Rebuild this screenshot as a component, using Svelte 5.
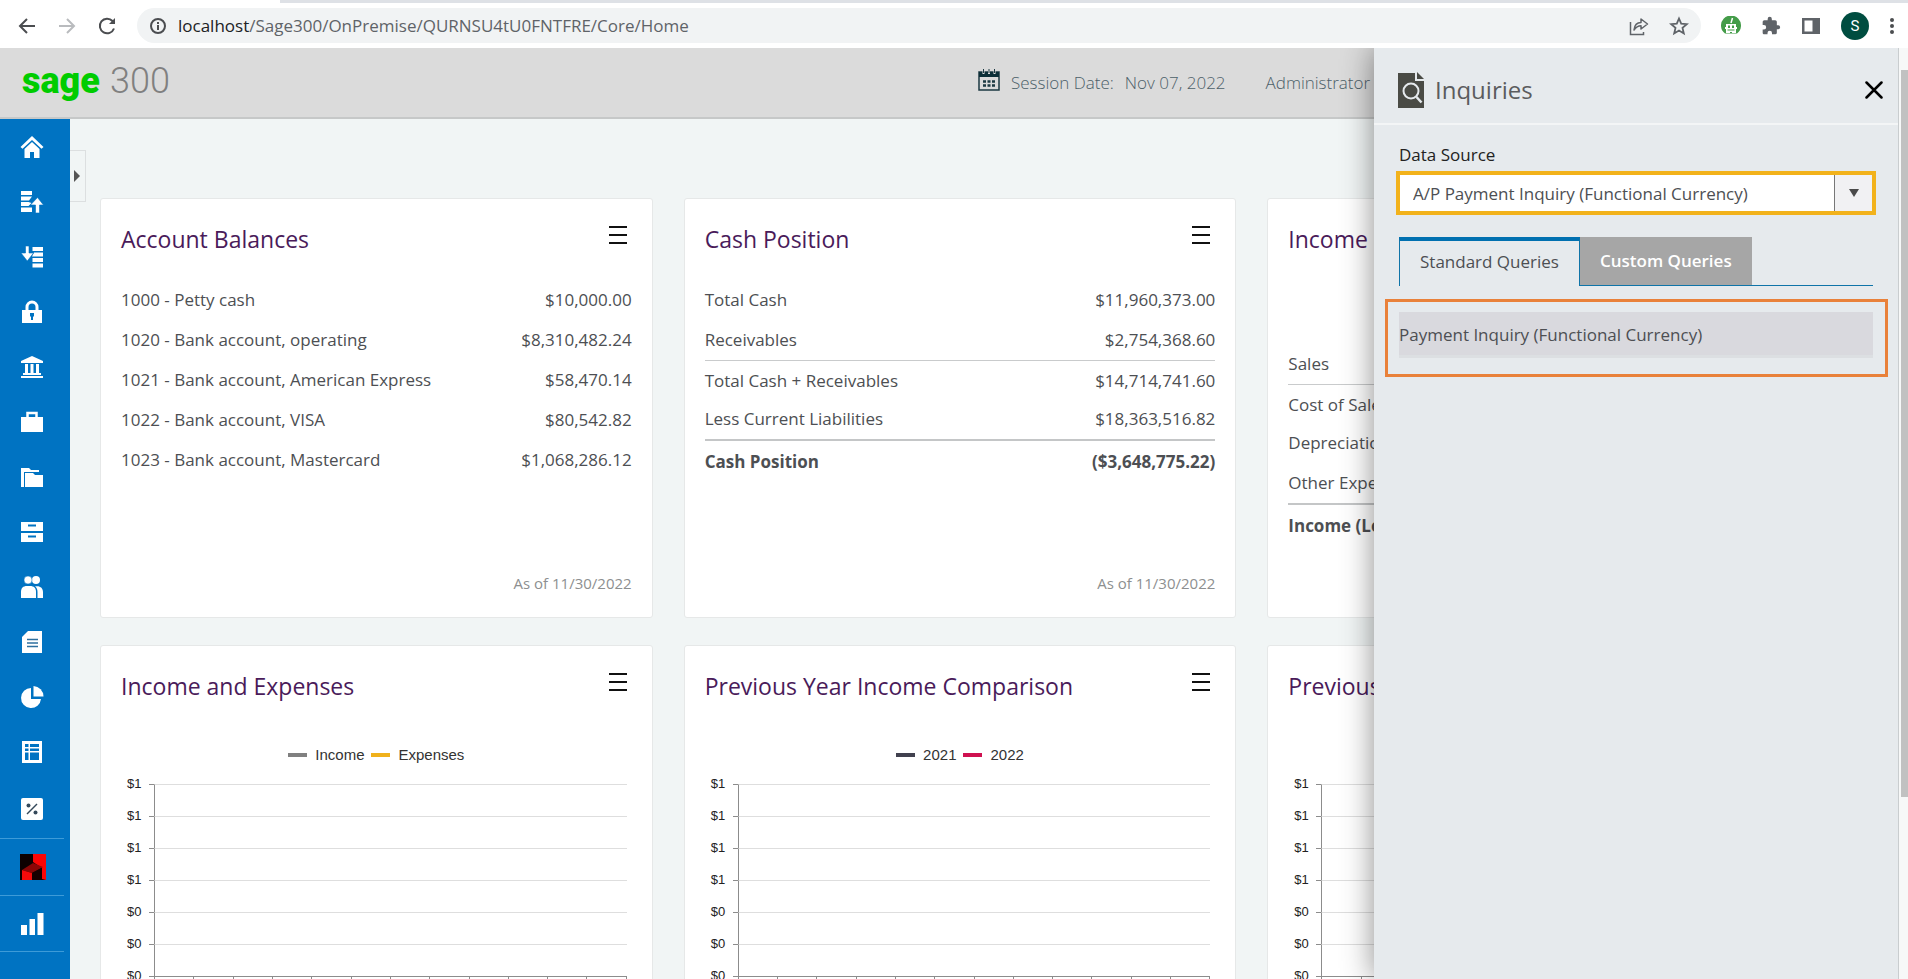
<script>
  let dataSource = 'A/P Payment Inquiry (Functional Currency)'
  let activeTab = 'standard'

  const modules = [
    'Home',
    'Accounts Receivable',
    'Accounts Payable',
    'Administrative Services',
    'Bank Services',
    'Common Services',
    'Project and Job Costing',
    'Inventory Control',
    'Payroll',
    'Order Entry',
    'General Ledger',
    'Purchase Orders',
    'Tax Services',
  ]

  const balances = [
    { label: '1000 - Petty cash', value: '$10,000.00' },
    { label: '1020 - Bank account, operating', value: '$8,310,482.24' },
    { label: '1021 - Bank account, American Express', value: '$58,470.14' },
    { label: '1022 - Bank account, VISA', value: '$80,542.82' },
    { label: '1023 - Bank account, Mastercard', value: '$1,068,286.12' },
  ]

  const cash = [
    { label: 'Total Cash', value: '$11,960,373.00' },
    { label: 'Receivables', value: '$2,754,368.60' },
    { label: 'Total Cash + Receivables', value: '$14,714,741.60', kind: 'subtotal' },
    { label: 'Less Current Liabilities', value: '$18,363,516.82' },
    { label: 'Cash Position', value: '($3,648,775.22)', kind: 'total' },
  ]

  const income = [
    { label: 'Sales', value: '' },
    { label: 'Cost of Sales', value: '', kind: 'subtotal' },
    { label: 'Depreciation', value: '' },
    { label: 'Other Expenses', value: '' },
    { label: 'Income (Loss)', value: '', kind: 'total' },
  ]

  const cards = [
    { title: 'Account Balances', rows: balances, asOf: 'As of 11/30/2022' },
    { title: 'Cash Position', rows: cash, asOf: 'As of 11/30/2022' },
    { title: 'Income Reporting', rows: income, lowered: true },
    {
      title: 'Income and Expenses',
      legend: [
        { name: 'Income', color: '#808080' },
        { name: 'Expenses', color: '#f0b11c' },
      ],
    },
    {
      title: 'Previous Year Income Comparison',
      legend: [
        { name: '2021', color: '#41414f' },
        { name: '2022', color: '#cf1150' },
      ],
    },
    { title: 'Previous Year Expense Comparison', legend: [] },
  ]

  const ticks = ['$1', '$1', '$1', '$1', '$0', '$0']
  const months = Array(12).fill(0)
</script>

<div class="browser">
  <div class="tabstrip"><span></span></div>
  <div class="toolbar">
    <button class="tool" aria-label="Back">
      <svg width="20" height="20" viewBox="0 0 20 20" fill="none" stroke="#4b4d50" stroke-width="2"><path d="M18 10H3M10 3l-7 7 7 7" /></svg>
    </button>
    <button class="tool" aria-label="Forward">
      <svg width="20" height="20" viewBox="0 0 20 20" fill="none" stroke="#b9bbbe" stroke-width="2"><path d="M2 10h15M10 3l7 7-7 7" /></svg>
    </button>
    <button class="tool" aria-label="Reload">
      <svg width="20" height="20" viewBox="0 0 20 20" fill="none" stroke="#4b4d50" stroke-width="2"><path d="M17 12.500a7.300 7.300 0 1 1-1.500-7.500L17.500 7" /><path d="M18 2v6h-6z" fill="#4b4d50" stroke="none" /></svg>
    </button>
    <div class="omnibox">
      <svg width="18" height="18" viewBox="0 0 18 18" fill="none" stroke="#4b4d50" stroke-width="2"><circle cx="9" cy="9" r="7" /><path d="M9 8v5M9 5v2" /></svg>
      <div class="address"><b>localhost</b>/Sage300/OnPremise/QURNSU4tU0FNTFRE/Core/Home</div>
      <button aria-label="Share">
        <svg width="20" height="20" viewBox="0 0 20 20" fill="none" stroke="#5f6368" stroke-width="1.500"><path d="M1.500 6v12.500h13V16" /><path d="M5 14c.5-5 3-7.500 7-7.500V3l6.500 5-6.500 5V9.800C9 9.800 7 11 5 14z" stroke-linejoin="round" /></svg>
      </button>
      <button aria-label="Bookmark">
        <svg width="20" height="20" viewBox="0 0 20 20" fill="none" stroke="#5f6368" stroke-width="1.800"><path d="M10 2.500l2.200 5.200 5.600.5-4.300 3.700 1.300 5.500-4.800-2.900-4.800 2.900 1.300-5.500-4.300-3.700 5.600-.5z" /></svg>
      </button>
    </div>
    <button class="tool" aria-label="Extension">
      <svg width="20" height="20" viewBox="0 0 20 20"><path d="M4 17.500A10 10 0 1 1 16 17.500z" fill="#449c49" /><path d="M5 8h10v3h1v2h-1v4h-4v-1H9v1H5v-4H4v-2h1z" fill="#fff" /><path d="M10 7l1.500-5" stroke="#fff" stroke-width="1.500" /><path d="M7 9.500h2V12H7zM11 9.500h2V12h-2zM6.500 13.500h7v1h-7z" fill="#449c49" /></svg>
    </button>
    <button class="tool" aria-label="Extensions">
      <svg width="20" height="20" viewBox="0 0 24 24" fill="#5f6368"><path d="M20.500 11H19V7a2 2 0 0 0-2-2h-4V3.500a2.500 2.500 0 0 0-5 0V5H4a2 2 0 0 0-2 2v3.800h1.500a2.700 2.700 0 0 1 0 5.400H2V20c0 1.100.9 2 2 2h3.800v-1.500a2.700 2.700 0 0 1 5.400 0V22H17a2 2 0 0 0 2-2v-4h1.500a2.500 2.500 0 0 0 0-5z" /></svg>
    </button>
    <button class="tool" aria-label="Side panel">
      <svg width="20" height="20" viewBox="0 0 20 20"><path d="M1 2h18v16H1zM3.500 4.500v11h8v-11z" fill="#5f6368" fill-rule="evenodd" /></svg>
    </button>
    <button class="profile">S</button>
    <button class="tool" aria-label="Menu">
      <svg width="6" height="18" viewBox="0 0 6 18" fill="#4b4d50"><circle cx="3" cy="3" r="2" /><circle cx="3" cy="9" r="2" /><circle cx="3" cy="15" r="2" /></svg>
    </button>
  </div>
</div>

<div class="page">
  <header>
    <div class="logo"><strong>sage</strong><span>300</span></div>
    <div class="session">
      <svg width="22" height="22" viewBox="0 0 22 22"><path d="M1 3h20v18H1z" fill="none" stroke="#1d3a43" stroke-width="1.500" /><path d="M1 3h20v5H1z" fill="#0c2f38" /><path d="M5.500 0v5M11 0v5M16.500 0v5" stroke="#dbdbdb" stroke-width="2" /><path d="M5.500 0v4M11 0v4M16.500 0v4" stroke="#1d3a43" /><path d="M5 12.500h12M5 16.500h12" stroke="#1d3a43" stroke-width="2.500" stroke-dasharray="3 1.500" /></svg>
      <span>Session Date:</span>
      <time datetime="2022-11-07">Nov 07, 2022</time>
      <a href="#user">Administrator</a>
    </div>
  </header>

  <div class="body">
    <nav>
      {#each modules as name, i}
        <a href="#{i}" aria-label={name}>
          <svg width="24" height="24" viewBox="0 0 24 24" fill="#fff">
            {#if i === 0}
              <path d="M12 1L0.500 12l2 1.800L12 5l9.500 8.800 2-1.800z" /><path d="M12 7l-7.500 7v9H10v-6h4v6h5.500v-9z" />
            {:else if i === 1}
              <path d="M1 1h11v4H1zM1 6.500h11L9 10.500H1zM1 12h7.500l3 1-3 3H1zM1 17.500h11v4.500H1z" /><path d="M17.500 7.500l6 7.500h-4v8h-4v-8h-5z" stroke="#0073c2" stroke-width=".6" />
            {:else if i === 2}
              <path d="M12.500 2H23v4H12.500zM14 7.500h9v4h-11zM12.500 13H23v4H12.500zM12.500 18.500H23v4H12.500z" /><path d="M5.500 1h3.500v7h4.500l-6.200 8L1 8h4.500z" stroke="#0073c2" stroke-width=".6" />
            {:else if i === 3}
              <path d="M2 10h20v13H2z" /><path d="M7 11V7a5 5 0 0 1 10 0v4" fill="none" stroke="#fff" stroke-width="3" /><path d="M10 13h4v3l-1 1v3h-2v-3l-1-1z" fill="#0073c2" />
            {:else if i === 4}
              <path d="M12 1L1 6v2h22V6zM5 9h3v10H5zM10.500 9h3v10h-3zM16 9h3v10h-3zM3 18h18v2H3zM1 21h22v2H1z" />
            {:else if i === 5}
              <path d="M1 7h22v15H1z" /><path d="M7.500 7V3h9v4" fill="none" stroke="#fff" stroke-width="2.500" />
            {:else if i === 6}
              <path d="M1 3h8l2 2h8v2H4v15H1z" /><path d="M5 8h8l2 2h8v12H5z" />
            {:else if i === 7}
              <path d="M1 2h22v9H1zM8 4.500v2h8v-2zM1 13h22v9H1zM8 15.500v2h8v-2z" fill-rule="evenodd" />
            {:else if i === 8}
              <circle cx="16" cy="5" r="4" /><circle cx="8" cy="5" r="4" stroke="#0073c2" stroke-width=".5" /><path d="M1 23v-6c0-4 2-6 6-6h3c4 0 6 2 6 6v6zM17.500 23v-6c0-3-1-4.500-2.500-5.500 5-1 8 1.500 8 5.500v6z" />
            {:else if i === 9}
              <path d="M8 1h14v22H2V7z" /><path d="M7 9.500h11M7 13h11M7 16.500h11" stroke="#2e6f9e" stroke-width="1.500" />
            {:else if i === 10}
              <path d="M11 3a10 10 0 1 0 10 11H11z" /><path d="M13.500 1v10.500H23.500A10.500 10.500 0 0 0 13.500 1z" />
            {:else if i === 11}
              <path d="M2 1h20v22H2zM5 4v3h3.500V4zM10 4v3h9V4zM5 8.500V11h3.500V8.500zM10 8.500V11h9V8.500zM5 12.500V20h3.500v-7.500zM10 12.500V20h9v-7.500z" fill-rule="evenodd" />
            {:else}
              <rect x="1" y="1" width="22" height="22" rx="2" /><path d="M7 17L17 7" stroke="#34495a" stroke-width="1.500" /><circle cx="8.500" cy="8.500" r="2" fill="#34495a" /><circle cx="15.500" cy="15.500" r="2" fill="#34495a" />
            {/if}
          </svg>
        </a>
      {/each}
      <a class="ruled" href="#addon" aria-label="Add-on">
        <svg width="26" height="26" viewBox="0 0 26 26"><path d="M0 0h26v26H0z" fill="#0d0000" /><path d="M13 0h13v26l-4-1V14l-9-6z" fill="#fa0505" /><path d="M2 16l11-7 10 4-11 6z" fill="#8c0606" /><path d="M2 16l10 3v7H2z" fill="#f40a0a" /><path d="M12 19l10-5v12H12z" fill="#180000" /></svg>
      </a>
      <a class="ruled" href="#analytics" aria-label="Analytics">
        <svg width="24" height="24" viewBox="0 0 24 24" fill="#fff"><path d="M1 13h6v10H1zM9.500 7h5.500v16H9.500zM17.500 1h6v22h-6z" /></svg>
      </a>
    </nav>

    <button class="expand" aria-label="Expand menu"></button>

    <main>
      {#each cards as card}
        <section class="card">
          <div class="card-head">
            <h2>{card.title}</h2>
            <button class="burger" aria-label="Widget menu"><i></i><i></i><i></i></button>
          </div>
          {#if card.rows}
            <table class:lowered={card.lowered}>
              <tbody>
                {#each card.rows as row}
                  <tr class={row.kind}>
                    <th scope="row">{row.label}</th>
                    <td>{row.value}</td>
                  </tr>
                {/each}
              </tbody>
            </table>
            {#if card.asOf}
              <p>{card.asOf}</p>
            {/if}
          {:else}
            <div class="legend">
              {#each card.legend as item}
                <span><i style="background: {item.color}"></i>{item.name}</span>
              {/each}
            </div>
            <div class="chart">
              {#each ticks as tick}
                <div class="band"><span>{tick}</span><i></i><div></div></div>
              {/each}
              <div class="band base">
                <span>$0</span><i></i>
                <div>{#each months as month}<b></b>{/each}</div>
              </div>
            </div>
          {/if}
        </section>
      {/each}
    </main>
  </div>

  <aside>
    <div class="panel-head">
      <svg width="27" height="36" viewBox="0 0 27 36"><path d="M0 1h17v8h9v27H0z" fill="#4a4b45" /><path d="M19 0l7 7h-7z" fill="#4a4b45" /><circle cx="13" cy="19" r="7.500" fill="none" stroke="#e6eaed" stroke-width="2" /><path d="M18.500 25l5 5.500" stroke="#e6eaed" stroke-width="2.500" /></svg>
      <h1>Inquiries</h1>
      <button aria-label="Close">
        <svg width="18" height="18" viewBox="0 0 18 18" stroke="#000" stroke-width="2.500" stroke-linecap="round"><path d="M1.500 1.500l15 15M16.500 1.500l-15 15" /></svg>
      </button>
    </div>
    <div class="panel-body">
      <label for="source">Data Source</label>
      <div class="select">
        <select id="source" bind:value={dataSource}>
          <option>A/P Payment Inquiry (Functional Currency)</option>
        </select>
        <span class="arrow"></span>
      </div>
      <div class="tabs" role="tablist">
        <button role="tab" class:active={activeTab === 'standard'} aria-selected={activeTab === 'standard'} on:click={() => (activeTab = 'standard')}>Standard Queries</button>
        <button role="tab" class:active={activeTab === 'custom'} aria-selected={activeTab === 'custom'} on:click={() => (activeTab = 'custom')}>Custom Queries</button>
      </div>
      <div class="results">
        <a href="#inquiry">Payment Inquiry (Functional Currency)</a>
      </div>
    </div>
  </aside>
  <div class="scrollbar"><div></div></div>
</div>

<style>
  :global(body) {
    overflow: hidden;
  }
  :global(#app) {
    display: flex;
    flex-direction: column;
    height: 100vh;
    overflow: hidden;
    font-family: 'Open Sans', 'Noto Sans', sans-serif;
    font-size: 17px;
    color: #4d4f53;
  }
  * {
    box-sizing: border-box;
  }
  button {
    padding: 0;
    border: 0;
    background: none;
    font: inherit;
    cursor: pointer;
  }
  a {
    color: inherit;
    text-decoration: none;
  }
  svg {
    display: block;
    flex: none;
  }

  /* browser bar */
  .browser {
    flex: none;
    background: #fff;
  }
  .tabstrip {
    height: 3px;
    background: #dee1e6;
  }
  .tabstrip span {
    display: block;
    width: 280px;
    height: 100%;
    background: #fff;
  }
  .toolbar {
    display: flex;
    align-items: center;
    gap: 20px;
    height: 45px;
    padding: 0 13px 0 17px;
  }
  .omnibox {
    flex: 1;
    display: flex;
    align-items: center;
    gap: 20px;
    height: 35px;
    padding: 0 12px;
    border-radius: 18px;
    background: #f1f3f4;
  }
  .address {
    flex: 1;
    margin-left: -9px;
    color: #5f6368;
  }
  .address b {
    font-weight: 400;
    color: #202124;
  }
  .profile {
    width: 28px;
    height: 28px;
    border-radius: 50%;
    background: #004d40;
    font-family: Roboto, sans-serif;
    font-size: 15px;
    color: #fff;
  }

  .page {
    position: relative;
    flex: 1;
    display: flex;
    flex-direction: column;
    min-height: 0;
    overflow: hidden;
    background: #f1f5f5;
  }
  header {
    flex: none;
    display: flex;
    justify-content: space-between;
    height: 71px;
    border-bottom: 2px solid #c6c8c8;
    background: #dbdbdb;
  }
  .logo {
    display: flex;
    align-items: baseline;
    gap: 10px;
    padding-left: 22px;
    font-family: Roboto, sans-serif;
    line-height: 66px;
  }
  .logo strong {
    font-size: 36px;
    font-weight: 900;
    color: #0c0;
  }
  .logo span {
    font-size: 36px;
    font-weight: 300;
    color: #808080;
  }
  .session {
    display: flex;
    align-items: center;
    width: 930px;
    font-weight: 300;
    color: #4c6069;
  }
  .session svg {
    margin-bottom: 6px;
  }
  .session span {
    margin: 0 11px;
  }
  .session a {
    margin-left: 40px;
  }

  .body {
    flex: 1;
    display: flex;
    min-height: 0;
  }
  nav {
    flex: none;
    width: 70px;
    background: #0073c2;
  }
  nav a {
    display: flex;
    align-items: center;
    height: 55px;
    padding-left: 20px;
  }
  nav a.ruled {
    width: 64px;
    height: 57px;
    border-top: 1px solid #3d9bd8;
  }
  nav a.ruled:last-child {
    border-bottom: 1px solid #3d9bd8;
  }
  nav a:nth-last-child(3) {
    height: 59px;
  }
  .expand {
    flex: none;
    display: flex;
    align-items: center;
    width: 16px;
    height: 52px;
    margin-top: 31px;
    padding-left: 4px;
    border: 1px solid #dcdfe0;
    border-left: 0;
  }
  .expand::after {
    content: '';
    border: 6px solid transparent;
    border-left-color: #555;
    border-right: 0;
  }

  main {
    flex: 1;
    display: grid;
    grid-template-columns: repeat(3, 1fr);
    grid-auto-rows: 420px;
    gap: 27px 31px;
    padding: 79px 88px 0 14px;
  }
  .card {
    display: flex;
    flex-direction: column;
    min-width: 0;
    padding: 20px;
    border: 1px solid #e6e8e8;
    border-radius: 3px;
    background: #fff;
  }
  .card-head {
    display: flex;
    justify-content: space-between;
    align-items: flex-start;
    height: 61px;
  }
  h2 {
    margin: 0;
    font-size: 23px;
    font-weight: 400;
    line-height: 40px;
    color: #4a1b5a;
  }
  .burger {
    display: flex;
    flex-direction: column;
    gap: 6px;
    margin: 7px 5px 0 0;
  }
  .burger i {
    width: 18px;
    height: 2px;
    background: #111;
  }
  table {
    width: 100%;
    border-collapse: separate;
    border-spacing: 0;
  }
  table.lowered {
    margin-top: 64px;
  }
  th,
  td {
    height: 40px;
    padding: 0;
    font-weight: 400;
    line-height: 24px;
    text-align: left;
    white-space: nowrap;
  }
  td {
    text-align: right;
  }
  .subtotal > * {
    height: 39px;
    padding-top: 2px;
    border-top: 1px solid #c9cbcc;
  }
  .total > * {
    padding-top: 4px;
    border-top: 2px solid #c4c6c7;
    font-weight: 700;
  }
  p {
    margin: auto 0 2px;
    font-size: 15px;
    line-height: 24px;
    text-align: right;
    color: #8d8f90;
  }

  /* charts */
  .legend {
    display: flex;
    justify-content: center;
    gap: 7px;
    height: 57px;
    padding-top: 18px;
    font-family: 'Liberation Sans', Arial, sans-serif;
    font-size: 15px;
    line-height: 20px;
    color: #333;
  }
  .legend span {
    display: flex;
    align-items: center;
    gap: 8px;
    height: 20px;
  }
  .legend i {
    width: 19px;
    height: 4px;
  }
  .chart {
    padding-right: 5px;
    font-family: 'Liberation Sans', Arial, sans-serif;
    font-size: 13px;
    line-height: 16px;
    color: #222;
  }
  .band {
    display: flex;
    height: 32px;
  }
  .band span {
    width: 28px;
    margin-top: -8px;
    padding-left: 6px;
  }
  .band i {
    width: 5px;
    height: 1px;
    background: #8c8c8c;
  }
  .band div {
    flex: 1;
    border-top: 1px solid #dedede;
    border-left: 1px solid #8c8c8c;
  }
  .band.base div {
    display: flex;
    height: 6px;
    border-top-color: #8c8c8c;
  }
  .band b {
    flex: 1;
    border-right: 1px solid #8c8c8c;
  }

  /* inquiry drawer */
  aside {
    position: absolute;
    top: 0;
    right: 9px;
    bottom: 0;
    width: 525px;
    border-right: 1px solid #c9cdcf;
    background: #e6eaed;
    box-shadow: 0 0 30px rgba(0, 0, 0, 0.45);
    clip-path: inset(0 0 0 -40px);
  }
  .panel-head {
    display: flex;
    align-items: center;
    gap: 10px;
    height: 77px;
    padding: 8px 15px 0 24px;
    border-bottom: 2px solid #f3f5f6;
  }
  h1 {
    flex: 1;
    margin: 0;
    font-size: 24px;
    font-weight: 400;
    line-height: 32px;
    color: #5b5c5e;
  }
  .panel-body {
    padding: 18px 22px 0;
  }
  label {
    display: block;
    padding-left: 3px;
    line-height: 24px;
    color: #222;
  }
  .select {
    position: relative;
    margin-top: 4px;
    border: 4px solid #f2b21b;
    background: #fff;
  }
  select {
    display: block;
    width: 100%;
    height: 36px;
    padding: 0 50px 0 13px;
    border: 0;
    outline: 0;
    appearance: none;
    background: #fff;
    font: inherit;
    color: #4d4f53;
  }
  .arrow {
    position: absolute;
    top: 0;
    right: 0;
    bottom: 0;
    display: flex;
    align-items: center;
    justify-content: center;
    width: 38px;
    border-left: 1px solid #777;
    background: #f1f1f3;
    pointer-events: none;
  }
  .arrow::after {
    content: '';
    border: 5px solid transparent;
    border-top: 8px solid #4a4a4a;
    border-bottom: 0;
  }
  .tabs {
    display: flex;
    margin: 22px 3px 0;
    background: linear-gradient(#0f74a8, #0f74a8) bottom / 100% 1px no-repeat;
  }
  .tabs button {
    height: 48px;
    margin-bottom: 1px;
    padding: 0 20px 2px;
    background: #a6a6a6;
    font-weight: 600;
    color: #fff;
  }
  .tabs button.active {
    height: 49px;
    margin-bottom: 0;
    border: 1px solid #0f74a8;
    border-top: 4px solid #0070b0;
    border-bottom: 0;
    padding-bottom: 5px;
    background: #e6eaed;
    font-weight: 400;
    color: #4d4f53;
  }
  .results {
    margin: 13px -12px 0 -11px;
    padding: 10px 12px 16px 11px;
    border: 3px solid #e9813a;
  }
  .results a {
    display: block;
    height: 46px;
    border-bottom: 3px solid #dcdfe2;
    background: #d9d9de;
    line-height: 45px;
  }

  .scrollbar {
    position: absolute;
    top: 0;
    right: 0;
    bottom: 0;
    width: 9px;
    padding: 22px 0 0 2px;
    background: #f7f8f8;
  }
  .scrollbar div {
    height: 80%;
    background: #c1c1c1;
  }
</style>
